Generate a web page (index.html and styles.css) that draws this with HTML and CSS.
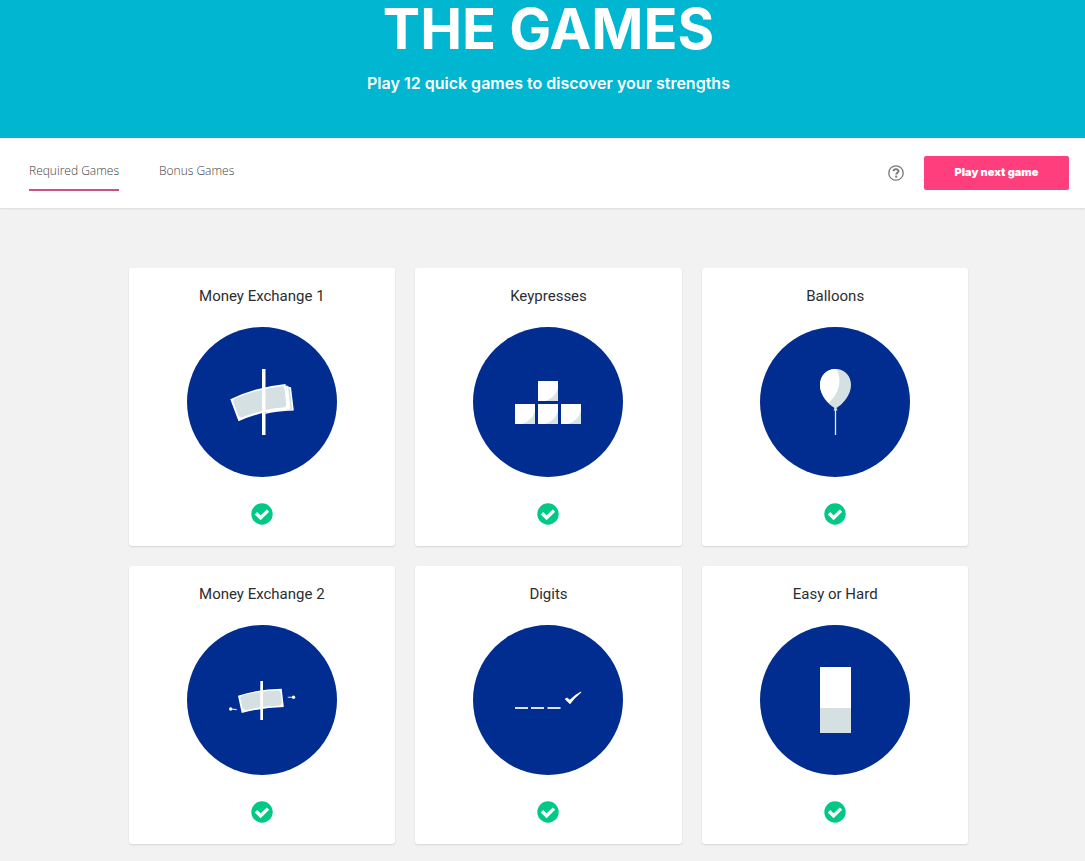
FILE: index.html
```html
<!DOCTYPE html>
<html lang="en">
<head>
<meta charset="utf-8">
<meta name="viewport" content="width=device-width, initial-scale=1">
<title>The Games</title>
<link rel="stylesheet" href="styles.css">
</head>
<body>
<svg class="defs" aria-hidden="true">
  <symbol id="done" viewBox="0 0 22 22">
    <circle cx="11" cy="11" r="10.7" fill="#00c885"/>
    <path d="M5 10.200 9.600 14.800 17 7.600" fill="none" stroke="#fff" stroke-width="3.400"/>
  </symbol>
</svg>
<header class="hero">
  <h1 class="hero-title">THE GAMES</h1>
  <p class="hero-subtitle">Play 12 quick games to discover your strengths</p>
</header>
<div class="toolbar">
  <nav class="tabs">
    <a class="tab tab-active" href="#required">Required Games</a>
    <a class="tab" href="#bonus">Bonus Games</a>
  </nav>
  <div class="actions">
    <button class="help" type="button" aria-label="Help">
      <svg class="help-icon" viewBox="0 0 16 16"><circle cx="8" cy="8" r="7.2" fill="none" stroke="#777" stroke-width="1.3"/><path d="M5.5 6.3C5.600 3.300 10.600 3.500 10.500 6.200 10.300 7.800 8.200 7.700 8.200 9.600" fill="none" stroke="#777" stroke-width="1.900"/><path d="M7.200 10.600h2v2h-2z" fill="#777"/></svg>
    </button>
    <button class="play" type="button">Play next game</button>
  </div>
</div>
<main class="games">
  <article class="card">
    <h2 class="card-title">Money Exchange 1</h2>
    <svg class="art" viewBox="0 0 150 150" aria-hidden="true">
      <circle cx="75" cy="75" r="75" fill="#002d8f"/>
      <path d="M96 59 104 60.300 106.800 83.500Q88 84 78 87z" fill="#fff"/>
      <path d="M102.300 62 104.500 82.500" stroke="#b9c8d2" stroke-width=".7"/>
      <path d="M99 58.500 101.500 59.500 104 82 100 83z" fill="#fff" stroke="#b5c5cd" stroke-width=".5"/>
      <path d="M43.300 72.200Q68 60 98.500 57L102 82Q74 84 51.500 94.300z" fill="#fff"/>
      <path d="M46 73.700Q47.500 72 48 71.600 71 61.500 95.500 59.200L97.500 61 99.300 78 98 80.300Q75 82 54.500 90.500L51.500 89z" fill="#d5e0e2"/>
      <path d="M75 42h3.500v66H75z" fill="#fff"/>
    </svg>
    <svg class="done" role="img" aria-label="Completed"><use href="#done"/></svg>
  </article>
  <article class="card">
    <h2 class="card-title">Keypresses</h2>
    <svg class="art" viewBox="0 0 150 150" aria-hidden="true">
      <circle cx="75" cy="75" r="75" fill="#002d8f"/>
      <g id="key"><path d="M65 54h20v20H65z" fill="#fff"/><path d="M85 61v13H72Q82 71 85 61z" fill="#d9e2e4"/></g>
      <use href="#key" x="-23" y="23"/>
      <use href="#key" y="23"/>
      <use href="#key" x="23" y="23"/>
    </svg>
    <svg class="done" role="img" aria-label="Completed"><use href="#done"/></svg>
  </article>
  <article class="card">
    <h2 class="card-title">Balloons</h2>
    <svg class="art" viewBox="0 0 150 150" aria-hidden="true">
      <circle cx="75" cy="75" r="75" fill="#002d8f"/>
      <path d="M75.500 80v28" stroke="#e4ebef" stroke-width="1.300"/>
      <path d="M75.500 42C66 42 60 49 60 58 60 68 68 77 74.500 81L73.500 83.500H77.500L76.500 81C83 77 91 68 91 58 91 49 85 42 75.500 42z" fill="#d5e0e2"/>
      <path d="M75.500 42C66 42 60 49 60 58 60 65 64 71.500 68.500 76 80 66 82 52 76.500 42z" fill="#fff"/>
    </svg>
    <svg class="done" role="img" aria-label="Completed"><use href="#done"/></svg>
  </article>
  <article class="card">
    <h2 class="card-title">Money Exchange 2</h2>
    <svg class="art" viewBox="0 0 150 150" aria-hidden="true">
      <circle cx="75" cy="75" r="75" fill="#002d8f"/>
      <path d="M51 70.700Q72 64 94.700 63.800L96.800 82Q75 82.500 54.700 88z" fill="#fff"/>
      <path d="M53 72Q54.500 71.500 56 70 74 65.800 91.500 65.500L93.500 67 95 78 93.500 80.500Q75 81 58.500 85.300L55.700 83.500z" fill="#d5e0e2"/>
      <path d="M73.300 56h2.700v39h-2.700z" fill="#fff"/>
      <path d="M43.700 84 49.700 84.600M100.700 72.300h6" stroke="#d5e0e2" stroke-width="1.100"/>
      <circle cx="43.700" cy="84" r="1.700" fill="#fff"/><circle cx="106.500" cy="72.300" r="1.700" fill="#fff"/>
    </svg>
    <svg class="done" role="img" aria-label="Completed"><use href="#done"/></svg>
  </article>
  <article class="card">
    <h2 class="card-title">Digits</h2>
    <svg class="art" viewBox="0 0 150 150" aria-hidden="true">
      <circle cx="75" cy="75" r="75" fill="#002d8f"/>
      <path d="M42 83h13M58 83h13M74.500 83h13" stroke="#d9e3f0" stroke-width="2"/>
      <path d="M91.700 74 94 72.500 96.800 74.800Q102 69.500 108 66.500L108.300 67.500Q102 72.500 97 79.200z" fill="#fff"/>
    </svg>
    <svg class="done" role="img" aria-label="Completed"><use href="#done"/></svg>
  </article>
  <article class="card">
    <h2 class="card-title">Easy or Hard</h2>
    <svg class="art" viewBox="0 0 150 150" aria-hidden="true">
      <circle cx="75" cy="75" r="75" fill="#002d8f"/>
      <path d="M60 42h31v41H60z" fill="#fff"/><path d="M60 83h31v25H60z" fill="#d5e0e2"/>
    </svg>
    <svg class="done" role="img" aria-label="Completed"><use href="#done"/></svg>
  </article>
</main>
</body>
</html>
```
FILE: styles.css
```css
* { box-sizing: border-box; }

body {
  margin: 0;
  background: #f2f2f2;
  color: #2b2d30;
  font-family: Inter, "Open Sans", sans-serif;
}

.defs { display: none; }

.hero {
  padding: 0 0 43px 12px;
  background: #00b6d1;
  color: #fff;
  text-align: center;
}

.hero-title {
  margin: 0;
  font-size: 56px;
  font-weight: 700;
  line-height: 59px;
}

.hero-subtitle {
  margin: 0;
  padding-top: 12px;
  font-size: 16px;
  font-weight: 600;
  line-height: 24px;
}

.toolbar {
  display: flex;
  justify-content: space-between;
  align-items: center;
  height: 70px;
  padding: 0 16px 0 29px;
  background: #fff;
  box-shadow: 0 1px 2px rgba(0, 0, 0, 0.1);
}

.tabs { display: flex; gap: 40px; }

.tab {
  padding: 7px 0 9px;
  border-bottom: 2px solid transparent;
  color: #3c3e42;
  font-family: "Open Sans", sans-serif;
  font-size: 12px;
  font-weight: 300;
  line-height: 18px;
  text-decoration: none;
}

.tab-active { border-bottom-color: #cf4f87; }

.actions { display: flex; align-items: center; gap: 20px; }

.help {
  display: flex;
  padding: 0;
  border: 0;
  background: none;
}

.help-icon { width: 16px; height: 16px; }

.play {
  width: 145px;
  height: 34px;
  padding: 0 0 2px;
  border: 0;
  border-radius: 2px;
  background: #ff3f7d;
  color: #fff;
  font-family: inherit;
  font-size: 11px;
  font-weight: 900;
}

.games {
  display: grid;
  grid-template-columns: repeat(3, 1fr);
  gap: 20px;
  max-width: 852px;
  margin: 0 auto;
  padding: 60px 0 20px 12px;
}

.card {
  display: flex;
  flex-direction: column;
  align-items: center;
  padding: 16px 12px 21px;
  border-radius: 3px;
  background: #fff;
  box-shadow: 0 1px 2px rgba(0, 0, 0, 0.12);
}

.card-title {
  margin: 0 0 19px;
  font-family: Roboto, sans-serif;
  font-size: 15px;
  font-weight: 400;
  line-height: 24px;
}

.art { width: 150px; height: 150px; }

.done { width: 22px; height: 22px; margin-top: 26px; }
```
